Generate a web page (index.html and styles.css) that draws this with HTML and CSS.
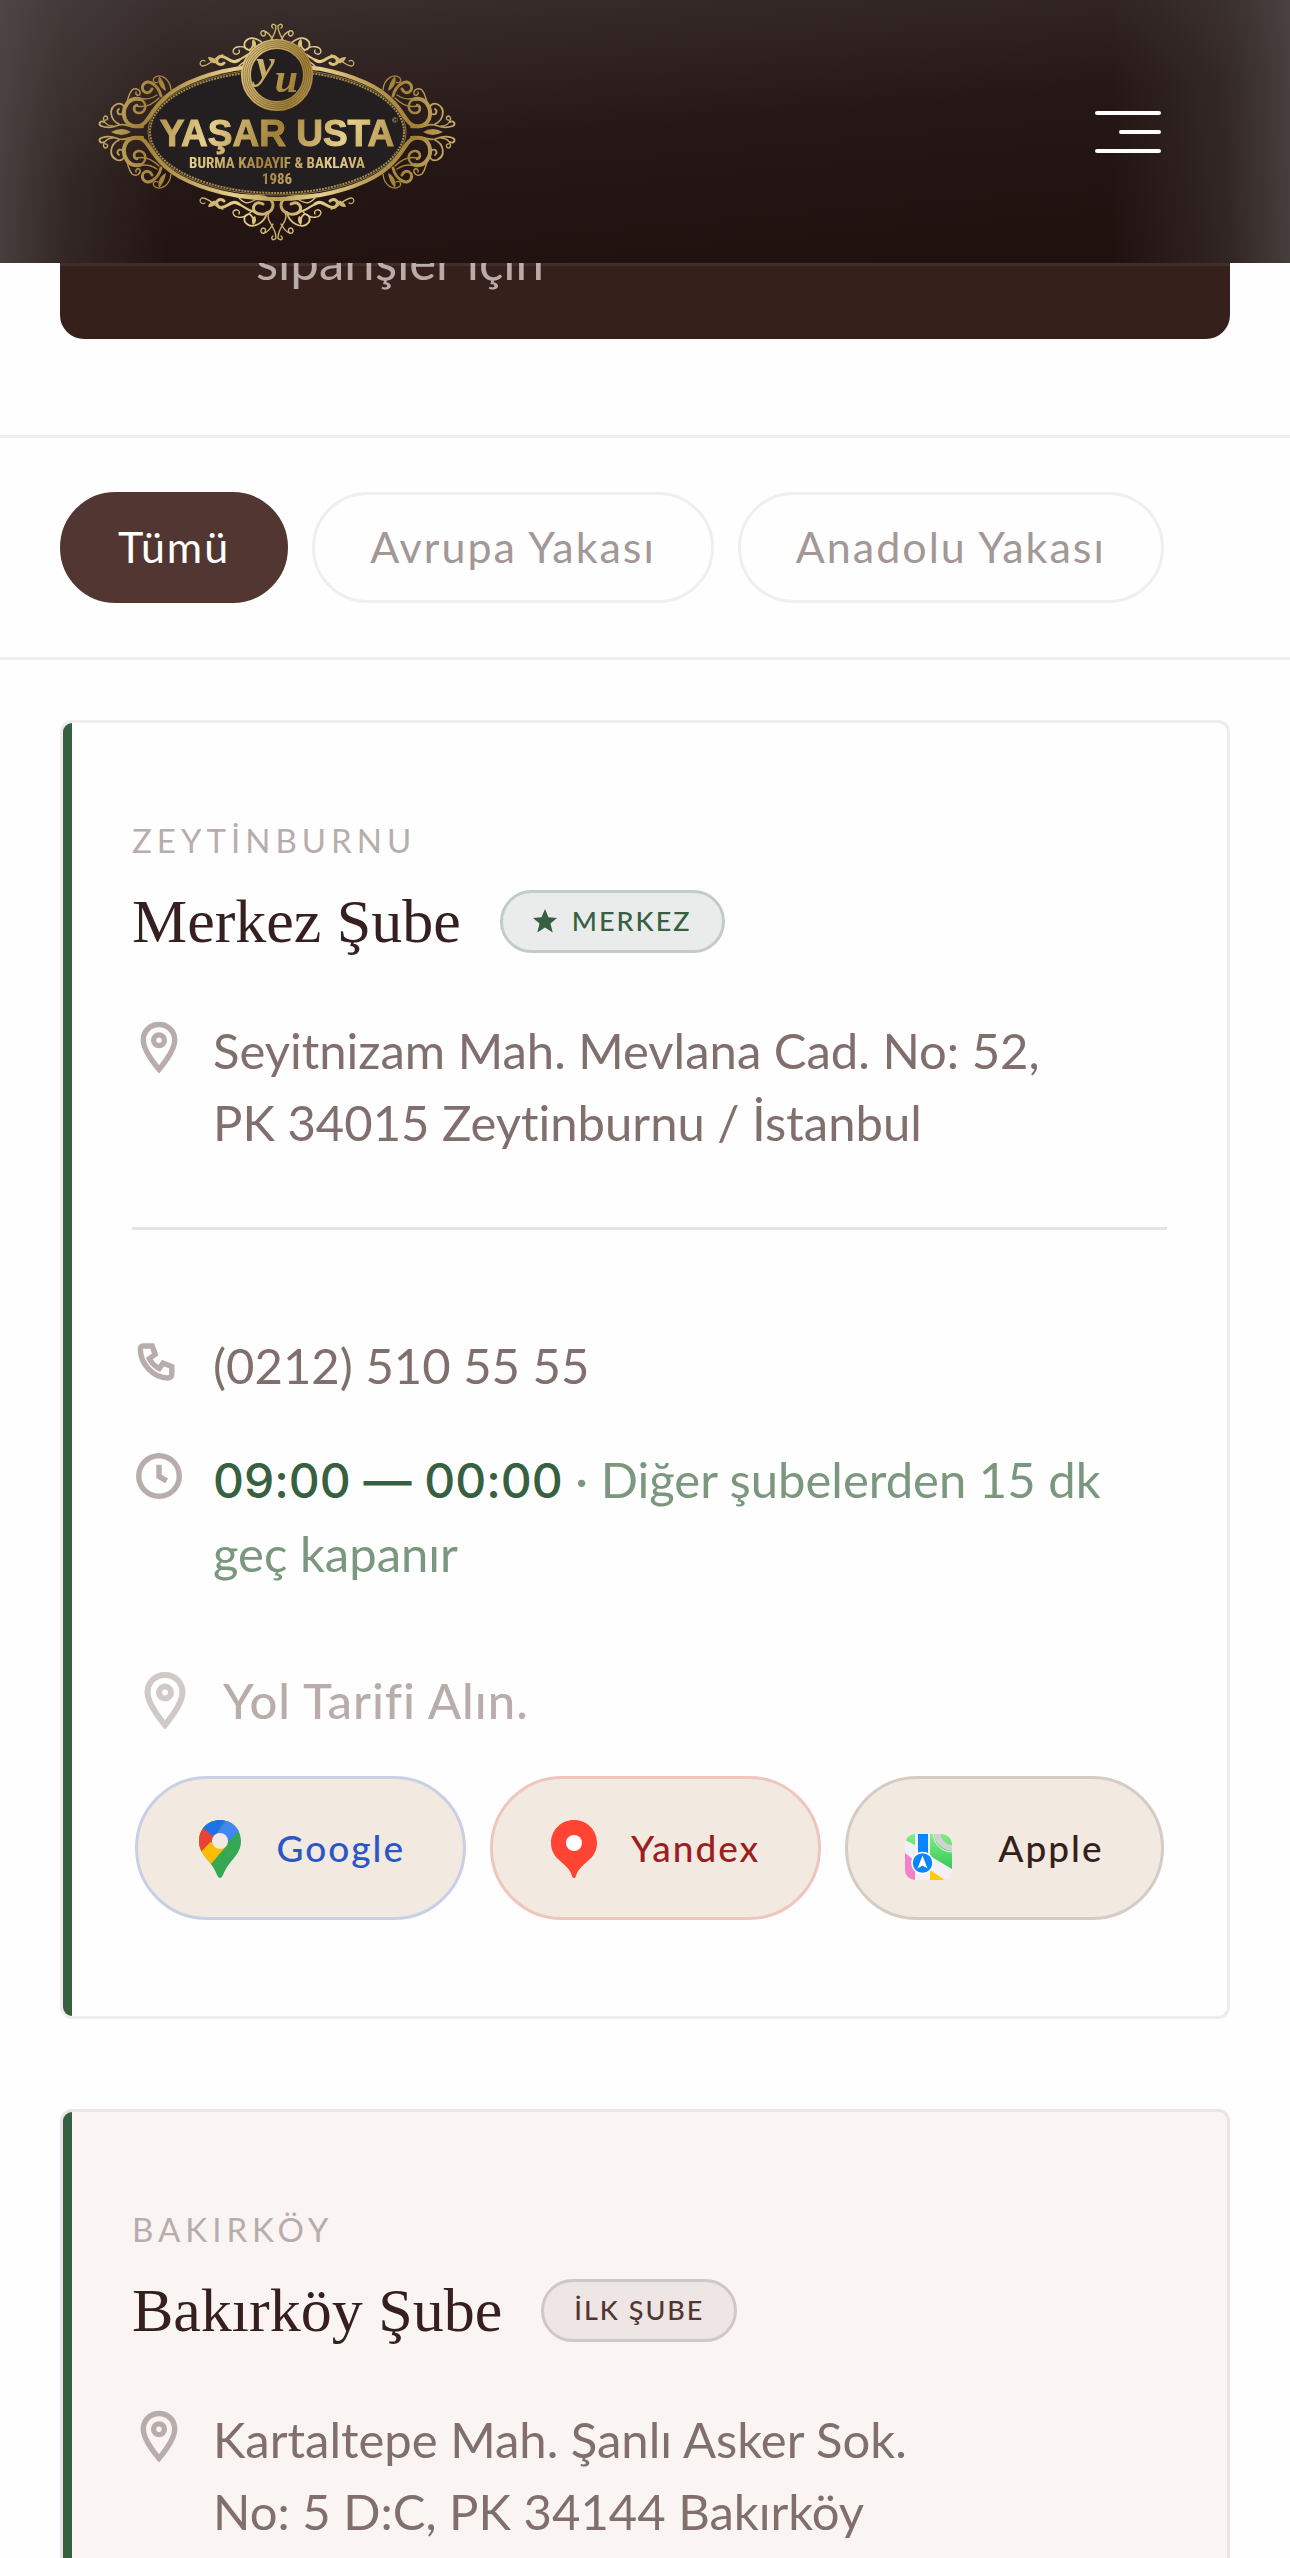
FILE: index.html
```html
<!DOCTYPE html>
<html lang="tr">
<head>
  <meta charset="UTF-8">
  <meta name="viewport" content="width=device-width, initial-scale=1.0">
  <title>Şubelerimiz – Yaşar Usta</title>
  <link rel="stylesheet" href="styles.css">
</head>
<body>

  <!-- shared icons -->
  <svg class="sprite" aria-hidden="true">
    <symbol id="icon-pin" viewBox="0 0 24 24">
      <path d="M12 2C8 2 5 5 5 9c0 5 7 13 7 13s7-8 7-13c0-4-3-7-7-7z"/>
      <circle cx="12" cy="9" r="2.4"/>
    </symbol>
    <symbol id="icon-phone" viewBox="0 0 24 24">
      <path d="M4.8 4.9H9l1.3 3.7-2.6 1.9c1 2 2.400 3.400 4.400 4.400l1.700-2.400 3.900 1.500v3.400c0 1-.7 1.700-1.700 1.700C9.500 19.100 3.700 13 3.700 6.100c0-.7.4-1.200 1.100-1.200z"/>
    </symbol>
    <symbol id="icon-clock" viewBox="0 0 24 24">
      <circle cx="12" cy="12" r="9"/>
      <path d="M12 7v5.200l3.400 2"/>
    </symbol>
  </svg>

  <header class="header">
    <a class="logo" href="#" aria-label="Yaşar Usta">
      <svg viewBox="-180 -110 360 220">
        <defs>
          <linearGradient id="gold" gradientUnits="userSpaceOnUse" x1="0" y1="0" x2="60" y2="24" spreadMethod="reflect">
            <stop offset="0" stop-color="#a17f37"/>
            <stop offset="1" stop-color="#e6cf8c"/>
          </linearGradient>
          <g id="ornament" fill="none" stroke="url(#gold)" stroke-linecap="round">
            <path stroke-width="4" d="M0 67C40 67 75 57 97 45c21-12 27-25 33-33 6-9 18-8 22 1 4 11-4 22-14 20"/>
            <path stroke-width="2.500" d="M138 33c-9-2-8-15 1-14 5 1 5 7 1 8"/>
            <path stroke-width="1.800" d="M134 5c12-2 16 4 24 2 8-3 12-3 18-1 3 2 1 6-3 4M158 8c9 4 11 16 2 20-7 2-10-6-5-10 4-2 6 3 3 5"/>
            <path stroke-width="1.300" d="M164 6c8 0 12 8 8 10-4 0-3-5 0-4"/>
            <path stroke-width="1.400" d="M151 28c-3 6-2 9-6 14-4 3-9 0-8-4 2-3 5 0 4 2M118 34c6-6 14-10 22-8M120 37c6-4 12-5 18-3"/>
            <path stroke-width="3" d="M116 36c3 12 14 18 18 11 3-7-6-11-9-4"/>
            <path stroke-width="1.200" d="M106 42c1 12 11 17 17 12 2-3-1-6-4-4"/>
            <path fill="url(#gold)" stroke="none" d="M111 41c1 6 3 11 7 15 2-6-1-12-7-15z"/>
            <path stroke-width="3" d="M40 63C25 65 4 62 4 73c0 8 12 12 18 7 4-5-1-12-8-8"/>
            <path stroke-width="2" d="M22 80c12-2 14-12 26-8"/>
            <path stroke-width="3" d="M38 72c8-6 12 6 20 3 6-5-1-10-5-6"/>
            <path stroke-width="1.300" d="M54 77c8-1 12-11 21-11 4 2 1 7-3 5M26 80c8 8 18 6 18 0-2-4-8-2-6 2M22 68c8 4 10 4 16-2"/>
            <path stroke-width="1.800" d="M10 80c2 12 16 18 22 10 3-7-6-12-8-3"/>
            <path stroke-width="1.400" d="M8 80c4 10-7 14-7 26 3 4 6 0 3-2M4 92c6 11 13 11 12 6-2-4-6-1-4 2"/>
            <path fill="url(#gold)" stroke="none" d="M60 69c4-1 8 1 9 6-5 0-8-2-9-6zM22 84c3 1 4 5 2 9-3-2-4-5-2-9z"/>
          </g>
        </defs>
        <ellipse rx="130" ry="65" fill="#231f20"/>
        <ellipse rx="127" ry="61" fill="none" stroke="#a58a4c" stroke-width="2" stroke-dasharray="2 1"/>
        <ellipse rx="129" ry="63" fill="none" stroke="#8d733a" stroke-width="1"/>
        <use href="#ornament"/>
        <use href="#ornament" transform="scale(-1 1)"/>
        <use href="#ornament" transform="scale(1 -1)"/>
        <use href="#ornament" transform="scale(-1 -1)"/>
        <path fill="url(#gold)" d="M146 0q9-6 20 0-11 6-20 0zM-146 0q-9-6-20 0 11 6 20 0z"/>
        <circle cy="-57" r="31" fill="#231f20" stroke="url(#gold)" stroke-width="10"/>
        <g fill="none" stroke="#6d5524" stroke-width=".6">
          <circle cy="-57" r="28"/><circle cy="-57" r="30"/><circle cy="-57" r="32"/><circle cy="-57" r="34"/>
        </g>
        <g class="logo-text" fill="url(#gold)">
          <text class="logo-script" y="-54">y<tspan dy="14">u</tspan></text>
          <text class="logo-name" y="14">YAŞAR USTA</text>
          <text class="logo-reg" x="118" y="-9">©</text>
          <text class="logo-sub" y="36">BURMA KADAYIF &amp; BAKLAVA</text>
          <text class="logo-sub" y="52">1986</text>
        </g>
      </svg>
    </a>
    <button class="menu-btn" type="button" aria-label="Menü">
      <span></span><span class="short"></span><span></span>
    </button>
  </header>

  <main>
    <section class="promo">
      <div class="promo-card">
        <p>siparişler için</p>
      </div>
    </section>

    <nav class="filters" aria-label="Bölge">
      <button class="filter active" type="button">Tümü</button>
      <button class="filter" type="button">Avrupa Yakası</button>
      <button class="filter" type="button">Anadolu Yakası</button>
    </nav>

    <section class="branches">
      <article class="branch">
        <p class="district">ZEYTİNBURNU</p>
        <div class="branch-title">
          <h2>Merkez Şube</h2>
          <span class="badge badge-main">
            <svg viewBox="0 0 24 24"><path d="M12 0l3.500 8.200 8.500.7-6.500 5.600 2.200 9L12 18.600l-7.700 4.900 2.200-9L0 8.900l8.500-.7z"/></svg>
            MERKEZ
          </span>
        </div>
        <div class="row">
          <svg class="icon"><use href="#icon-pin"/></svg>
          <p>Seyitnizam Mah. Mevlana Cad. No: 52,<br>PK 34015 Zeytinburnu / İstanbul</p>
        </div>
        <hr>
        <div class="contact">
          <div class="row">
            <svg class="icon"><use href="#icon-phone"/></svg>
            <a class="phone" href="tel:+902125105555">(0212) 510 55 55</a>
          </div>
          <div class="row">
            <svg class="icon"><use href="#icon-clock"/></svg>
            <p class="hours"><strong>09:00 — 00:00</strong> · Diğer şubelerden 15 dk geç kapanır</p>
          </div>
        </div>
        <div class="directions">
          <p class="directions-title">
            <svg class="icon"><use href="#icon-pin"/></svg>
            Yol Tarifi Alın.
          </p>
          <div class="maps">
            <a class="map google" href="#">
              <svg viewBox="0 0 48 60">
                <defs>
                  <clipPath id="google-pin"><path d="M24 2C12 2 3 11 3 23c0 7 3 12 7 17 5 6 9 11 11 17 1 2 2 3 3 3s2-1 3-3c2-6 6-11 11-17 4-5 7-10 7-17C45 11 36 2 24 2z"/></clipPath>
                </defs>
                <g clip-path="url(#google-pin)">
                  <path fill="#34a853" d="M0 0h48v60H0z"/>
                  <path fill="#fbbc04" d="M0 30l12-6 20 2-17 20-15 1z"/>
                  <path fill="#ea4335" d="M0 0l24 14L5 34H0z"/>
                  <path fill="#1a73e8" d="M7 10l11 9 13-19H7z"/>
                  <path fill="#4285f4" d="M31 2L17 20l13 6 14-14L40 0z"/>
                </g>
                <circle cx="24" cy="23" r="8" fill="#f2e9e0"/>
              </svg>
              Google
            </a>
            <a class="map yandex" href="#">
              <svg viewBox="0 0 48 60">
                <path fill="#ff4433" d="M24 2C11 2 1 12 1 25c0 6 2.500 12 7 16 5 5 12 9 14 17 .5 2.700 3.500 2.700 4 0 2-8 9-12 14-17 4.500-4 7-10 7-16C47 12 37 2 24 2z"/>
                <circle cx="24" cy="25" r="8" fill="#fff"/>
              </svg>
              Yandex
            </a>
            <a class="map apple" href="#">
              <svg viewBox="0 0 60 66">
                <defs>
                  <clipPath id="apple-tile"><rect width="47" height="46" rx="10"/></clipPath>
                  <linearGradient id="apple-green" x2="0" y2="1"><stop stop-color="#84ee80"/><stop offset="1" stop-color="#34c759"/></linearGradient>
                </defs>
                <g transform="translate(0 19)" clip-path="url(#apple-tile)">
                  <path fill="#f2f0f5" d="M0 0h47v46H0z"/>
                  <path fill="url(#apple-green)" d="M0 0h10v11L0 6zM25 0h22v35L25 22z"/>
                  <path fill="none" stroke="#d1d1d6" stroke-width="6" d="M32-3c0 10 7 17 17 17"/>
                  <path fill="none" stroke="#f2f0f5" d="M28-3c0 13 8 21 20 21"/>
                  <path fill="#f280cb" d="M0 19l10 8v19H0z"/>
                  <path fill="#ffcc00" d="M25 36l15 10H25z"/>
                  <path fill="#0a84ff" d="M13 0h10v22H13z"/>
                  <circle cx="17.500" cy="29" r="10.500" fill="#0a84ff" stroke="#fff" stroke-width="1.500"/>
                  <path fill="#fff" d="M17.500 21.500l5 13-5-3-5 3z"/>
                </g>
              </svg>
              Apple
            </a>
          </div>
        </div>
      </article>

      <article class="branch first-branch">
        <p class="district">BAKIRKÖY</p>
        <div class="branch-title">
          <h2>Bakırköy Şube</h2>
          <span class="badge">İLK ŞUBE</span>
        </div>
        <div class="row">
          <svg class="icon"><use href="#icon-pin"/></svg>
          <p>Kartaltepe Mah. Şanlı Asker Sok.<br>No: 5 D:C, PK 34144 Bakırköy</p>
        </div>
      </article>
    </section>
  </main>

</body>
</html>
```
FILE: styles.css
```css
* {
  box-sizing: border-box;
}

body {
  margin: 0;
  background: #fefefe;
  color: #806f6c;
  font-family: Lato, "Liberation Sans", sans-serif;
  font-size: 49px;
  line-height: 72px;
  font-variant-ligatures: none;
  overflow-x: hidden;
}

p,
h2 {
  margin: 0;
}

a {
  color: inherit;
  text-decoration: none;
}

button {
  font-family: inherit;
  cursor: pointer;
}

.sprite {
  position: absolute;
  width: 0;
  height: 0;
}

/* header */
.header {
  position: fixed;
  top: 0;
  left: 0;
  right: 0;
  z-index: 10;
  height: 263px;
  padding: 0 129px 0 97px;
  display: flex;
  align-items: center;
  justify-content: space-between;
  background:
    linear-gradient(to right, rgba(80, 74, 72, 0.8), rgba(80, 74, 72, 0.35) 5%, transparent 13%, transparent 86%, rgba(80, 74, 72, 0.35) 95%, rgba(80, 74, 72, 0.8)),
    linear-gradient(175deg, #3d3231, #251715 50%, #1f100e);
  box-shadow: 0 3px rgba(255, 255, 255, 0.06);
}

.logo svg {
  display: block;
  width: 360px;
  height: 220px;
}

.logo-text {
  font-family: "Liberation Sans", sans-serif;
  font-weight: bold;
  text-anchor: middle;
}

.logo-script {
  font-family: "Liberation Serif", serif;
  font-style: italic;
  font-size: 42px;
}

.logo-name {
  font-size: 37px;
  stroke: url(#gold);
  stroke-width: 1px;
}

.logo-reg {
  font-size: 8px;
}

.logo-sub {
  font-family: "Liberation Sans Narrow", "Roboto Condensed", "Liberation Sans", sans-serif;
  font-size: 15px;
}

.menu-btn {
  display: flex;
  flex-direction: column;
  align-items: flex-end;
  gap: 15px;
  padding: 0;
  border: 0;
  background: none;
}

.menu-btn span {
  width: 66px;
  height: 4px;
  border-radius: 2px;
  background: #fff;
}

.menu-btn .short {
  width: 42px;
}

/* promo card, slides under the fixed header */
.promo {
  padding: 150px 60px 96px;
  border-bottom: 3px solid #eeeded;
}

.promo-card {
  padding: 75px 60px 42px 196px;
  border-radius: 24px;
  background: #36201c;
  color: #b8aba8;
  font-size: 51px;
}

/* filters */
.filters {
  display: flex;
  gap: 24px;
  padding: 54px 60px;
  border-bottom: 3px solid #f1f0f1;
}

.filter {
  height: 111px;
  padding: 0 55px 2px;
  border: 3px solid #f0eef0;
  border-radius: 56px;
  background: none;
  color: #a39896;
  font-size: 43px;
  letter-spacing: 2px;
  white-space: nowrap;
}

.filter.active {
  border-color: #523632;
  background: #523632;
  color: #fff;
}

/* branch cards */
.branches {
  display: flex;
  flex-direction: column;
  gap: 90px;
  padding: 60px;
}

.branch {
  position: relative;
  padding: 93px 60px 96px 69px;
  border: 3px solid #eeecee;
  border-radius: 12px;
  overflow: hidden;
}

.branch::before {
  content: "";
  position: absolute;
  top: 0;
  bottom: 0;
  left: 0;
  width: 9px;
  background: #366040;
}

.first-branch {
  border-color: #ebe4e2;
  background: #faf4f2;
}

.district {
  color: #b8adad;
  font-size: 33px;
  line-height: 48px;
  letter-spacing: 5px;
}

.branch-title {
  display: flex;
  align-items: center;
  gap: 39px;
  margin: 18px 0 54px;
}

.branch-title h2 {
  color: #36201f;
  font-family: "Liberation Serif", serif;
  font-size: 62px;
  font-weight: normal;
  line-height: 78px;
}

.badge {
  display: flex;
  align-items: center;
  gap: 15px;
  height: 63px;
  padding: 0 30px;
  border: 3px solid #cfc8c6;
  border-radius: 32px;
  background: #eee6e4;
  color: #523632;
  font-size: 27px;
  font-weight: 500;
  letter-spacing: 2px;
}

.badge-main {
  border-color: #c0ccc4;
  background: #eaeceb;
  color: #366040;
}

.badge svg {
  width: 24px;
  height: 24px;
  fill: currentColor;
}

.row {
  display: flex;
  align-items: flex-start;
  gap: 27px;
}

.icon {
  flex: none;
  width: 54px;
  height: 54px;
  fill: none;
  stroke: #b8adab;
  stroke-width: 2.4;
}

.row .icon {
  margin-top: 6px;
}

hr {
  margin: 69px 0 99px;
  border: 0;
  border-top: 3px solid #e4e3e4;
}

.contact {
  display: flex;
  flex-direction: column;
  gap: 42px;
}

.hours {
  color: #7b987f;
}

.hours strong {
  color: #366040;
  font-family: Inter, Lato, sans-serif;
  font-size: 48px;
  font-weight: 500;
}

.directions {
  margin-top: 75px;
  padding: 0 3px;
}

.directions-title {
  display: flex;
  align-items: center;
  gap: 28px;
  color: #b8adab;
  font-weight: 500;
  letter-spacing: 1px;
}

.directions-title .icon {
  width: 60px;
  height: 60px;
  opacity: 0.65;
}

.maps {
  display: flex;
  gap: 24px;
  margin-top: 40px;
}

.map {
  display: flex;
  align-items: center;
  justify-content: center;
  gap: 33px;
  flex: 1 1 auto;
  height: 144px;
  border: 3px solid #c8d0e4;
  border-radius: 72px;
  background: #f2e9e0;
  color: #2a56c6;
  font-size: 37px;
  font-weight: 500;
  letter-spacing: 2px;
}

.map svg {
  width: 48px;
  height: 60px;
}

.yandex {
  border-color: #efc5be;
  color: #9c1f1f;
}

.apple {
  border-color: #d6ccc4;
  color: #36201c;
}

.apple svg {
  width: 60px;
  height: 66px;
}
```
